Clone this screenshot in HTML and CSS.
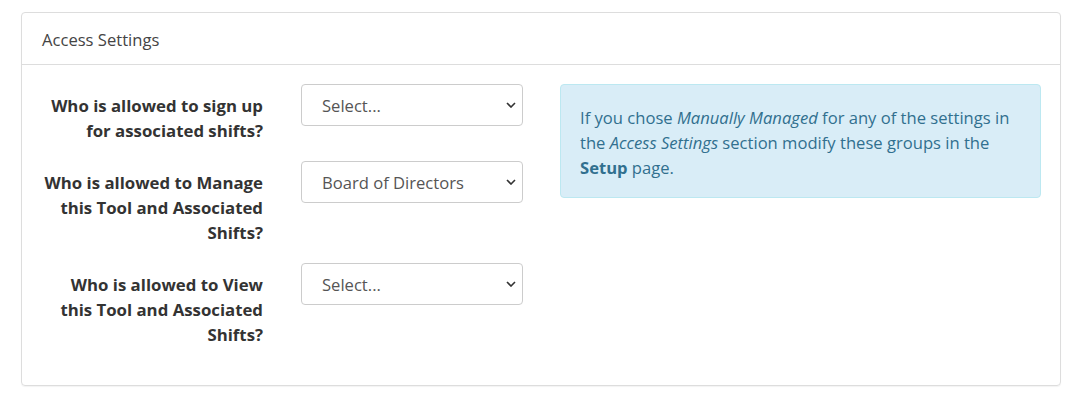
FILE: index.html
```html
<!DOCTYPE html>
<html>
<head>
<meta charset="utf-8">
<link rel="stylesheet" href="styles.css">
</head>
<body>
<div class="panel">
  <div class="panel-heading">Access Settings</div>
  <div class="panel-body">
    <div class="form">
      <div class="row">
        <label class="lbl">Who is allowed to sign up for associated shifts?</label>
        <div class="sel">
          <select><option>Select...</option></select>
          <svg class="chev" viewBox="0 0 10 6" width="10" height="6"><path d="M1 1 L5 5 L9 1" fill="none" stroke="#333" stroke-width="1.6"/></svg>
        </div>
      </div>
      <div class="row">
        <label class="lbl">Who is allowed to Manage this Tool and Associated Shifts?</label>
        <div class="sel">
          <select><option>Board of Directors</option></select>
          <svg class="chev" viewBox="0 0 10 6" width="10" height="6"><path d="M1 1 L5 5 L9 1" fill="none" stroke="#333" stroke-width="1.6"/></svg>
        </div>
      </div>
      <div class="row">
        <label class="lbl">Who is allowed to View this Tool and Associated Shifts?</label>
        <div class="sel">
          <select><option>Select...</option></select>
          <svg class="chev" viewBox="0 0 10 6" width="10" height="6"><path d="M1 1 L5 5 L9 1" fill="none" stroke="#333" stroke-width="1.6"/></svg>
        </div>
      </div>
    </div>
    <div class="info">If you chose <em>Manually Managed</em> for any of the settings in the <em>Access Settings</em> section modify these groups in the <strong>Setup</strong> page.</div>
  </div>
</div>
</body>
</html>
```
FILE: styles.css
```css
* { box-sizing: border-box; }
body {
  margin: 0;
  padding: 12px 16px 16px 21px;
  font-family: "Open Sans", "Noto Sans", sans-serif;
  font-size: 16.6px;
  color: #333;
  background: #fff;
}
.panel {
  width: 1040px;
  border: 1px solid #ddd;
  border-radius: 4px;
  box-shadow: 0 1px 1px rgba(0,0,0,0.05);
}
.panel-heading {
  height: 52px;
  padding: 15px 20px 0 20px;
  border-bottom: 1px solid #ddd;
  font-size: 16.6px;
  line-height: 24px;
  color: #444;
}
.panel-body {
  display: flex;
  align-items: flex-start;
  padding: 19px 19px 38px 15px;
}
.form {
  display: flex;
  flex-direction: column;
  gap: 18px;
  width: 486px;
}
.row {
  display: flex;
  align-items: flex-start;
  gap: 38px;
}
.lbl {
  width: 226px;
  text-align: right;
  font-weight: bold;
  font-size: 16.8px;
  line-height: 25px;
  padding-top: 9px;
  color: #333;
}
.sel {
  position: relative;
  width: 222px;
}
.sel select {
  display: block;
  width: 222px;
  height: 42px;
  appearance: none;
  -webkit-appearance: none;
  background: #fff;
  border: 1px solid #ccc;
  border-radius: 4px;
  padding: 0 30px 0 20px;
  font-family: "Open Sans", "Noto Sans", sans-serif;
  font-size: 16.6px;
  color: #555;
}
.chev {
  position: absolute;
  right: 7px;
  top: 18px;
}
.info {
  margin-left: 37px;
  width: 481px;
  background: #d9edf7;
  border: 1px solid #bce8f1;
  border-radius: 4px;
  color: #31708f;
  font-size: 16.6px;
  line-height: 25px;
  padding: 20px 19px 17px 19px;
}
```
